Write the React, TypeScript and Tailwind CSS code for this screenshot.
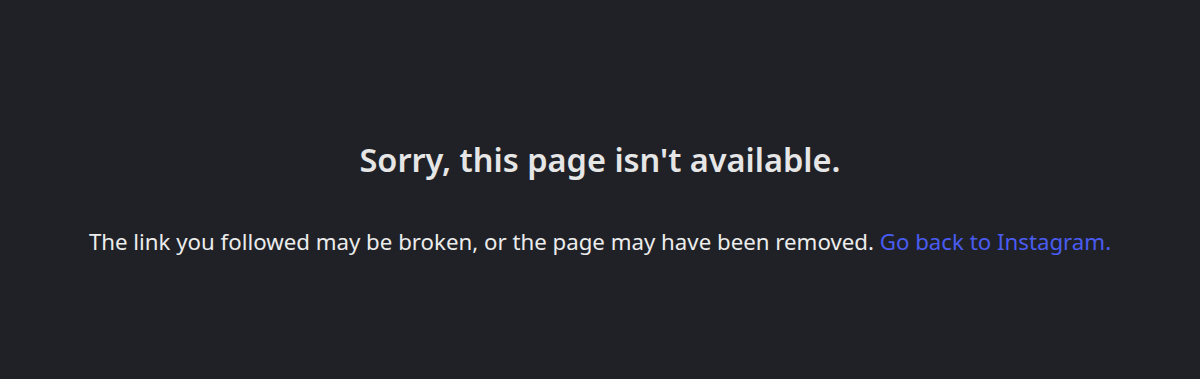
export default function App() {
  return (
    <div className="w-[1200px] h-[379px] bg-[#1f2127] flex flex-col items-center pt-[140px] font-['Noto_Sans',sans-serif]">
      <h2 className="text-[32.5px] leading-[40px] font-semibold text-[#e6e6e6]">Sorry, this page isn't available.</h2>
      <p className="mt-[47px] text-[22.25px] leading-[30px] text-[#ececec]">
        The link you followed may be broken, or the page may have been removed.{' '}
        <a className="text-[#4a5cf0]" href="#">Go back to Instagram.</a>
      </p>
    </div>
  )
}
